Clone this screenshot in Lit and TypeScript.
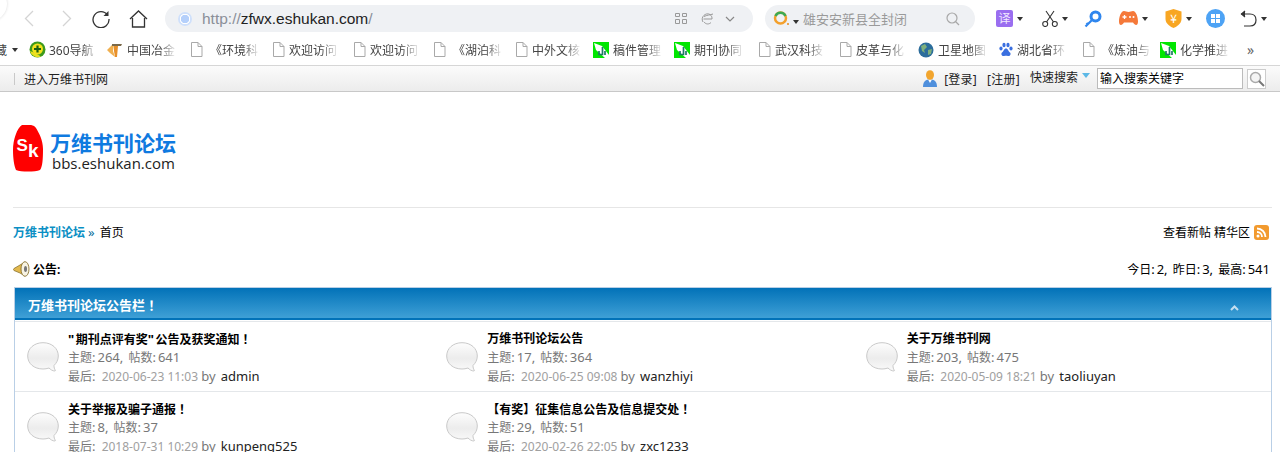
import { LitElement, html, css, svg } from "lit";
import { customElement } from "lit/decorators.js";

const pageIcon = svg`<svg width="13" height="15" viewBox="0 0 13 15"><path d="M1.500 .5H8L12 4.500V14.500H1.500Z M8 .5V4.500H12" fill="#fff" stroke="#a9a9a9"/></svg>`;
const greenIcon = svg`<svg width="16" height="16" viewBox="0 0 16 16"><rect width="16" height="16" fill="#00e600"/><path d="M1 1L9 4 16 13V16H12L3 8Z" fill="#fff"/><path d="M6 9V12.500H9.500V5M12 9V13" fill="none" stroke="#1f7a66" stroke-width="1.700"/></svg>`;
const icons: Record<string, unknown> = {
  page: pageIcon,
  green: greenIcon,
  i360: svg`<svg width="17" height="17" viewBox="0 0 17 17"><circle cx="8.500" cy="8.500" r="8" fill="#3d9a1c"/><path d="M1 10a8 8 0 0 0 11 5.500L6 12Z" fill="#e9e020"/><circle cx="8.500" cy="8" r="5.500" fill="#f2e21c"/><path d="M8.500 4.500V11.500M5 8H12" stroke="#1b5f10" stroke-width="2.200"/></svg>`,
  metal: svg`<svg width="16" height="16" viewBox="0 0 16 16"><path d="M0 8L5 3H7L6 9 8 15 3 11Z" fill="#f0b050"/><path d="M7 4H11L10 15 8 15 7 9Z" fill="#e8902a"/><path d="M5 2H15L14 4H5Z" fill="#7b6a4a"/></svg>`,
  globe: svg`<svg width="16" height="16" viewBox="0 0 16 16"><circle cx="8" cy="8" r="7.500" fill="#2c6d9c"/><path d="M3 4L7 2 9 5 6 8 7 11 4 9Z M10 8L14 7 13 12 10 13Z" fill="#7fb07c"/></svg>`,
  baidu: svg`<svg width="14" height="15" viewBox="0 0 14 15" fill="#3a6fe0"><ellipse cx="2" cy="6.500" rx="1.600" ry="2"/><ellipse cx="5" cy="3" rx="1.600" ry="2.200"/><ellipse cx="9" cy="3" rx="1.600" ry="2.200"/><ellipse cx="12" cy="6.500" rx="1.600" ry="2"/><path d="M7 6.500C5 6.500 5 9 3 10.500 1.500 12 3 14.500 5 14 7 13.500 7 13.500 9 14 11 14.500 12.500 12 11 10.500 9 9 9 6.500 7 6.500Z"/></svg>`,
};

const marks = [
  { w: 78, icon: "i360", t: "360导航", gap: 3 },
  { w: 83, icon: "metal", t: "中国冶金", gap: 4 },
  { w: 82, icon: "page", t: "《环境科", gap: 7 },
  { w: 81, icon: "page", t: "欢迎访问", gap: 4 },
  { w: 80, icon: "page", t: "欢迎访问", gap: 4 },
  { w: 82, icon: "page", t: "《湖泊科", gap: 7 },
  { w: 78, icon: "page", t: "中外文核", gap: 4 },
  { w: 81, icon: "green", t: "稿件管理", gap: 4 },
  { w: 84, icon: "green", t: "期刊协同", gap: 4 },
  { w: 81, icon: "page", t: "武汉科技", gap: 4 },
  { w: 79, icon: "page", t: "皮革与化", gap: 4 },
  { w: 81, icon: "globe", t: "卫星地图", gap: 4 },
  { w: 83, icon: "baidu", t: "湖北省环", gap: 4 },
  { w: 78, icon: "page", t: "《炼油与", gap: 7 },
  { w: 84, icon: "green", t: "化学推进", gap: 4 },
];

const boards = [
  [
    { t: '"期刊点评有奖"公告及获奖通知！', c: "主题:264, 帖数:641", d: "2020-06-23 11:03", u: "admin" },
    { t: "万维书刊论坛公告", c: "主题:17, 帖数:364", d: "2020-06-25 09:08", u: "wanzhiyi" },
    { t: "关于万维书刊网", c: "主题:203, 帖数:475", d: "2020-05-09 18:21", u: "taoliuyan" },
  ],
  [
    { t: "关于举报及骗子通报！", c: "主题:8, 帖数:37", d: "2018-07-31 10:29", u: "kunpeng525" },
    { t: "【有奖】征集信息公告及信息提交处！", c: "主题:29, 帖数:51", d: "2020-02-26 22:05", u: "zxc1233" },
  ],
];

const caret = html`<span class="caret"></span>`;

/* The reference sets Latin characters larger and wider than the CJK around them. */
function mixed(text: string) {
  return text.split(/([:,"]|！|[0-9a-zA-Z]+)/).map((part) => {
    if (!part) return "";
    if (part === "！") return html`<span class="tc">${part}</span>`;
    if (part === '"') return html`<span class="l q">${part}</span>`;
    if (/^[:,]$/.test(part)) return html`<span class="l p">${part}</span>`;
    if (/^[0-9a-zA-Z]+$/.test(part)) return html`<span class="l">${part}</span>`;
    return part;
  });
}

@customElement("app-root")
export class AppRoot extends LitElement {
  static styles = css`
    :host {
      display: block;
      width: 1280px;
      height: 452px;
      overflow: hidden;
      position: relative;
      background: #fff;
      color: #000;
      font: 12px "Noto Sans", "Noto Sans CJK SC", sans-serif;
    }
    svg { display: block; flex: none; }
    .l { font-size: 13px; }
    .p { letter-spacing: 2px; }
    .q { letter-spacing: 1.500px; }
    .tc { font-family: "Noto Sans CJK TC", sans-serif; }
    .orb { position: absolute; left: -27px; top: -13px; width: 34px; height: 34px; border-radius: 50%; background: #fff; box-shadow: 0 0 3px #d8d8d8; }
    .chrome { display: flex; align-items: center; height: 27px; padding: 5px 0 0 24px; position: relative; }
    .nav { display: flex; align-items: center; width: 141px; }
    .back { width: 38px; }
    .fwd { width: 30px; }
    .rel { width: 37px; }
    .url {
      width: 588px; height: 27px; border-radius: 14px; background: #eff1f4;
      display: flex; align-items: center; box-sizing: border-box; padding: 0 18px 0 13px;
      font: 15.500px "Liberation Sans", sans-serif; color: #222;
    }
    .url i { font-style: normal; color: #8a8f99; }
    .url .dot { width: 14px; height: 14px; border-radius: 50%; background: radial-gradient(circle, #b5d0fb 0 4px, #fff 4.500px 5px, #cfe0fb 5.500px); margin-right: 10px; }
    .url .txt { flex: 1; }
    .url .tools { display: flex; align-items: center; }
    .search {
      width: 210px; height: 27px; margin-left: 12px; border-radius: 14px; background: #eff1f4;
      display: flex; align-items: center; box-sizing: border-box; padding: 0 15px 0 8px; color: #9a9a9a; font-size: 13px;
    }
    .search .q2 { flex: 1; margin-left: 4px; font-family: "Noto Sans CJK SC", sans-serif; }
    .caret { width: 0; height: 0; border: 3px solid transparent; border-top: 4px solid #333; border-bottom: 0; flex: none; }
    .tbar { display: flex; align-items: center; margin-left: 21px; }
    .tb { display: flex; align-items: center; gap: 4px; }
    .marks {
      height: 34px; display: flex; align-items: center; box-sizing: border-box; padding: 2px 0 0;
      border-bottom: 1px solid #d6d6d6; color: #444; font-size: 12px; overflow: hidden;
    }
    .first { width: 29px; display: flex; align-items: center; flex: none; overflow: hidden; justify-content: flex-end; gap: 5px; padding-right: 11px; box-sizing: border-box; }
    .mk { display: flex; align-items: center; flex: none; }
    .mk b {
      font-weight: 400; white-space: nowrap; width: 50px; overflow: hidden;
      -webkit-mask-image: linear-gradient(90deg, #000 65%, transparent);
      mask-image: linear-gradient(90deg, #000 65%, transparent);
    }
    .more { color: #666; font-size: 14px; margin-left: 3px; }
    .site {
      height: 26px; box-sizing: border-box; display: flex; align-items: center;
      background: linear-gradient(#fbfbfb, #ececec); border-bottom: 1px solid #c8c8c8;
      padding: 0 14px; color: #222; font-size: 12px;
    }
    .site .sep { width: 1px; height: 12px; background: #c9c9c9; margin-right: 9px; }
    .site .sp { flex: 1; }
    .site .links { display: flex; align-items: center; gap: 10px; margin-right: 10px; letter-spacing: .25px; }
    .site .links svg { margin-right: -3px; }
    .site .fast { margin-top: -4px; }
    .site .tri { width: 0; height: 0; border: 4px solid transparent; border-top: 5px solid #5cb8e6; border-bottom: 0; margin: -6px 7px 0 4px; }
    .site .in { width: 146px; height: 21px; box-sizing: border-box; border: 1px solid #bbb; background: #fff; font-size: 12px; padding-left: 2px; line-height: 19px; color: #000; }
    .site .go { width: 19px; height: 20px; box-sizing: border-box; border: 1px solid #ccc; background: #fff; margin-left: 4px; display: flex; align-items: center; justify-content: center; }
    .main { padding: 0 8px 0 13px; }
    .logo { display: flex; gap: 7px; height: 116px; box-sizing: border-box; padding-top: 33px; border-bottom: 1px solid #e6e6e6; }
    .lt { display: flex; flex-direction: column; }
    .lt b { font: 700 21px/22px "Noto Sans CJK SC", sans-serif; color: #0f7ae0; margin-top: 6px; }
    .lt span { font: 15px/20px "Open Sans", sans-serif; color: #222; margin-left: 2px; }
    .crumb { display: flex; justify-content: space-between; align-items: center; margin-top: 14px; height: 20px; }
    .crumb a { color: #0a8fc4; font-weight: 700; }
    .crumb .raq { color: #0a6f9c; margin: 0 5px 0 3px; font-size: 13px; }
    .right { display: flex; align-items: center; gap: 4px; padding-right: 3px; }
    .notice { display: flex; justify-content: space-between; align-items: center; margin-top: 17px; height: 20px; padding-right: 2px; }
    .notice b { display: flex; align-items: center; gap: 3px; font-weight: 700; }
    .box { margin: 8px 0 0 1px; border: 1px solid #b9cfe6; border-bottom: 0; }
    .head {
      height: 32px; background: linear-gradient(#0272b8, #3fa0d6); border-bottom: 2px solid #0272b8; box-sizing: border-box;
      display: flex; align-items: center; justify-content: space-between; color: #fff; font-weight: 700; font-size: 13px; padding: 3px 32px 0 13px;
    }
    .head svg { margin-top: 7px; }
    .rows { margin-top: 1px; border-top: 1px solid #e4e7ea; }
    .row { display: grid; grid-template-columns: repeat(3, 419.333px); height: 70px; border-bottom: 1px solid #e4e7ea; box-sizing: border-box; }
    .cell { display: flex; padding: 7px 0 0 12px; gap: 9px; }
    .bub { margin-top: 13px; }
    .info { line-height: 19px; color: #777; }
    .info > div { height: 19px; white-space: nowrap; }
    .info .t { color: #000; font-weight: 700; }
    .info .d { color: #a0a0a0; margin-left: 1px; }
    .info .u { color: #222; margin-left: 2px; }
  `;

  private bubble() {
    return svg`<svg class="bub" width="32" height="30" viewBox="0 0 32 30"><defs><linearGradient id="bg" x1="0" y1="0" x2="0" y2="1"><stop offset="0" stop-color="#fdfdfd"/><stop offset=".55" stop-color="#ececec"/><stop offset="1" stop-color="#fafafa"/></linearGradient></defs><path d="M16 .7C7 .7 .7 6.500 .7 14 .7 21.500 7 27 16 27c2 0 4-.3 6-1 1.500 1.500 3.500 3 6 3 .5 0 .5-.5.2-1-.8-1-1.200-2.500-1.200-4.500C29.500 21 31.300 18 31.300 14 31.300 6.500 25 .7 16 .7Z" fill="url(#bg)" stroke="#c9c9c9"/></svg>`;
  }

  render() {
    return html`
      <div class="chrome">
        <div class="nav">
          <span class="back"><svg width="10" height="17" viewBox="0 0 10 17"><path d="M9 1L1.500 8.500 9 16" fill="none" stroke="#d4d4d4" stroke-width="1.300"/></svg></span>
          <span class="fwd"><svg width="10" height="17" viewBox="0 0 10 17"><path d="M1 1L8.500 8.500 1 16" fill="none" stroke="#d4d4d4" stroke-width="1.300"/></svg></span>
          <span class="rel"><svg width="18" height="18" viewBox="0 0 18 18"><path d="M15.500 5A8 8 0 1 0 17 9" fill="none" stroke="#333" stroke-width="1.300"/><path d="M16.500 1V6H11.500Z" fill="#333"/></svg></span>
          <span><svg width="19" height="18" viewBox="0 0 19 18"><path d="M1 9L9.500 1 18 9M3.500 8V17H15.500V8" fill="none" stroke="#333" stroke-width="1.300"/></svg></span>
        </div>
        <div class="url">
          <span class="dot"></span>
          <span class="txt"><i>http://</i>zfwx.eshukan.com<i>/</i></span>
          <span class="tools">
            <svg width="12" height="11" viewBox="0 0 12 11" fill="none" stroke="#999" style="margin-right:14px"><path d="M.5 .5H4.500V3.500H.5ZM7.500 .5H11.500V3.500H7.500ZM.5 6.500H4.500V10.500H.5ZM7.500 6.500H11.500V10.500H7.500Z"/></svg>
            <svg width="13" height="12" viewBox="0 0 13 12" fill="none" stroke="#999" style="margin-right:11px"><path d="M2 9C-1 4 5-1 9 1.500c2 1.500 2 3 2 4.500H2.500M3 3.500C6 2 9 2 12 1M3 9c2 2.500 5 2.500 7 .5"/></svg>
            <svg width="10" height="6" viewBox="0 0 10 6"><path d="M1 1L5 5 9 1" fill="none" stroke="#888" stroke-width="1.200"/></svg>
          </span>
        </div>
        <div class="search">
          <svg width="17" height="15" viewBox="0 0 17 15"><circle cx="7.500" cy="7" r="5.500" fill="none" stroke="#f3a02c" stroke-width="2.500"/><path d="M2.500 5a5.500 5.500 0 0 1 10 0" fill="none" stroke="#3caa52" stroke-width="2.500"/><circle cx="15" cy="13" r="1" fill="#e68a1e"/></svg>
          <span class="caret" style="margin:6px 0 0 3px"></span>
          <span class="q2">雄安安新县全封闭</span>
          <svg width="14" height="14" viewBox="0 0 14 14"><circle cx="6" cy="6" r="5" fill="none" stroke="#a8a8a8" stroke-width="1.200"/><path d="M9.500 9.500L13 13" stroke="#a8a8a8" stroke-width="1.200"/></svg>
        </div>
        <div class="tbar">
          <span class="tb" style="width:46px">
            <svg width="17" height="17" viewBox="0 0 17 17"><rect width="17" height="17" rx="2" fill="#9a6ef0"/><text x="8.500" y="13" font-size="12" text-anchor="middle" fill="#f1e8ff" font-family="Noto Sans CJK SC">译</text></svg>${caret}
          </span>
          <span class="tb" style="width:42px">
            <svg width="16" height="17" viewBox="0 0 16 17" fill="none" stroke="#333" stroke-width="1.100"><circle cx="3.200" cy="14" r="2.500"/><circle cx="12.800" cy="14" r="2.500"/><path d="M4.500 12L12 1M11.500 12L4 1"/></svg>${caret}
          </span>
          <span class="tb" style="width:35px">
            <svg width="18" height="18" viewBox="0 0 18 18" fill="none" stroke="#2f86ee"><circle cx="11.500" cy="6.500" r="4.500" stroke-width="3"/><path d="M8 10L1.500 16.500M2.500 13L4.500 15" stroke-width="2.200"/></svg>
          </span>
          <span class="tb" style="width:46px">
            <svg width="19" height="15" viewBox="0 0 19 15"><path d="M5 0C6.500 0 8 1 9.500 1S12.500 0 14 0C17 0 19 6 19 10.500 19 15 16 15 14 11.500H5C3 15 0 15 0 10.500 0 6 2 0 5 0Z" fill="#f5793a"/><path d="M3.500 6H7.500M5.500 4V8" stroke="#fff" stroke-width="1.300"/><circle cx="11" cy="6" r="1" fill="#fff"/><circle cx="14.500" cy="6" r="1" fill="#fff"/></svg>${caret}
          </span>
          <span class="tb" style="width:41px">
            <svg width="17" height="19" viewBox="0 0 17 19"><path d="M.5 2.500L8.500 0 16.500 2.500V10C16.500 15 11 18 8.500 19 6 18 .5 15 .5 10Z" fill="#f8a623"/><text x="8.500" y="13.500" font-size="12" text-anchor="middle" fill="#fff" font-family="Noto Sans CJK SC">¥</text></svg>${caret}
          </span>
          <span class="tb" style="width:34px">
            <svg width="19" height="19" viewBox="0 0 19 19"><circle cx="9.500" cy="9.500" r="9.500" fill="#4da3f5"/><path d="M5 5H9V9H5ZM10 5H14V9H10ZM5 10H9V14H5ZM10 10H14V14H10Z" fill="#fff"/></svg>
          </span>
          <span class="tb">
            <svg width="17" height="17" viewBox="0 0 17 17" fill="none" stroke="#333" stroke-width="1.200"><path d="M1 4H10C14 4 16 6.500 16 10S14 16 10 16H4"/><path d="M5 1L1.500 4 5 7" fill="#333"/></svg>${caret}
          </span>
        </div>
      </div>
      <div class="orb"></div>

      <div class="marks">
        <span class="first"><span>藏</span>${caret}</span>
        ${marks.map(
          (m) => html`<span class="mk" style="width:${m.w}px; gap:${m.gap}px">${icons[m.icon]}<b>${m.t}</b></span>`,
        )}
        <span class="more">»</span>
      </div>

      <div class="site">
        <span class="sep"></span>
        <span>进入万维书刊网</span>
        <span class="sp"></span>
        <span class="links">
          <svg width="14" height="17" viewBox="0 0 14 17"><path d="M0 17C0 11 3 9.500 7 9.500S14 11 14 17Z" fill="#4f8fdc"/><path d="M5 9.500L7 13 9 9.500Z" fill="#fff"/><ellipse cx="7" cy="5" rx="4" ry="4.800" fill="#f2a52e"/></svg>
          <span>[登录]</span><span>[注册]</span>
        </span>
        <span class="fast">快速搜索</span><span class="tri"></span>
        <span class="in">输入搜索关键字</span>
        <span class="go"><svg width="16" height="16" viewBox="0 0 16 16"><circle cx="6.500" cy="6.500" r="5" fill="#f4f4f4" stroke="#aaa" stroke-width="1.500"/><path d="M10 10L15 15" stroke="#777" stroke-width="2"/></svg></span>
      </div>

      <div class="main">
        <div class="logo">
          <svg width="30" height="47" viewBox="0 0 30 47">
            <path d="M9 0C14-1 21-.5 23 3 26 8 30 15 30 24 30 34 29.500 42 27 45 22 47 8 47 3 45 1 41 0 33 0 25 0 15 4 3 9 0Z" fill="#f00"/>
            <text x="3.500" y="26" font-family="Liberation Sans" font-weight="700" font-size="17" fill="#fff">S</text>
            <text x="15" y="32" font-family="Liberation Sans" font-weight="700" font-size="19" fill="#fff">k</text>
          </svg>
          <div class="lt"><b>万维书刊论坛</b><span>bbs.eshukan.com</span></div>
        </div>
        <div class="crumb">
          <span><a>万维书刊论坛</a><span class="raq">»</span>首页</span>
          <span class="right">查看新帖 精华区
            <svg width="15" height="15" viewBox="0 0 15 15"><rect width="15" height="15" rx="3" fill="#f29a2e"/><circle cx="4" cy="11" r="1.500" fill="#fff"/><path d="M3 7a5 5 0 0 1 5 5M3 3.500a8.500 8.500 0 0 1 8.500 8.500" fill="none" stroke="#fff" stroke-width="1.800"/></svg>
          </span>
        </div>
        <div class="notice">
          <b>
            <svg width="17" height="16" viewBox="0 0 17 16"><path d="M7 4L1 7.500C.3 8 .3 9 1 9.500L7 12 12 15V1Z" fill="#e3b94d" stroke="#8a7330" stroke-width=".8"/><ellipse cx="12" cy="8" rx="4" ry="7.300" fill="#f7f3e4" stroke="#8a7330" stroke-width=".9"/><ellipse cx="12.500" cy="8" rx="1.500" ry="3" fill="#777"/></svg>
            公告:
          </b>
          <span>${mixed("今日:2, 昨日:3, 最高:541")}</span>
        </div>
        <div class="box">
          <div class="head">
            <span>万维书刊论坛公告栏<span class="tc">！</span></span>
            <svg width="9" height="6" viewBox="0 0 9 6"><path d="M1 5L4.500 1.500 8 5" fill="none" stroke="#c5dff0" stroke-width="2"/></svg>
          </div>
          <div class="rows">
            ${boards.map(
              (r) => html`<div class="row">
                ${r.map(
                  (b) => html`<div class="cell">
                    ${this.bubble()}
                    <div class="info">
                      <div class="t">${mixed(b.t)}</div>
                      <div>${mixed(b.c)}</div>
                      <div>最后<span class="l p">:</span> <span class="d">${b.d}</span> <span class="l">by</span> <span class="u l">${b.u}</span></div>
                    </div>
                  </div>`,
                )}
              </div>`,
            )}
          </div>
        </div>
      </div>
    `;
  }
}
